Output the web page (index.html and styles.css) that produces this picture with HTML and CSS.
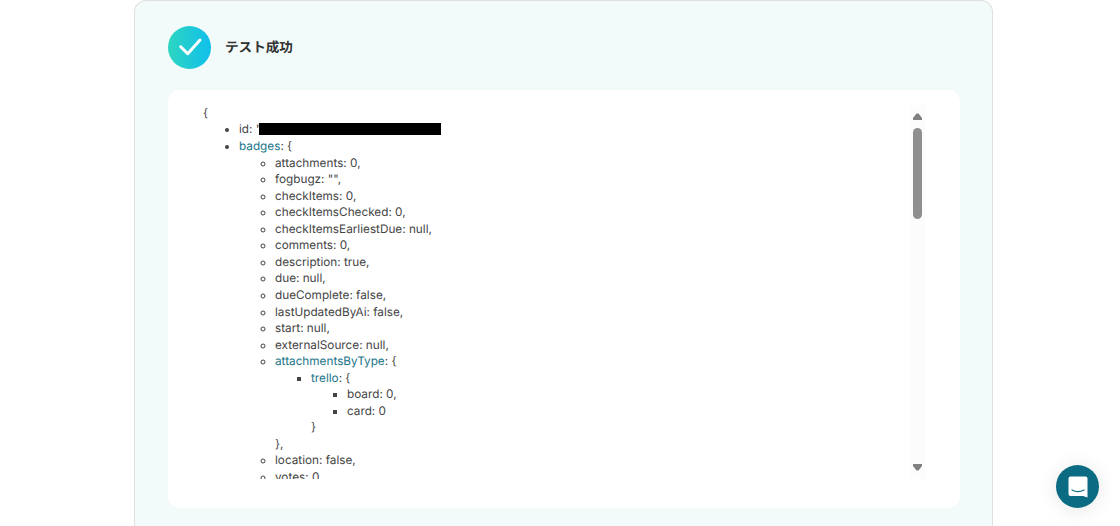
FILE: index.html
```html
<!DOCTYPE html>
<html lang="ja">
<head>
<meta charset="utf-8">
<title>テスト成功</title>
<link rel="stylesheet" href="styles.css">
</head>
<body>
<main class="panel">
  <header class="head">
    <span class="badge">
      <svg class="check" viewBox="0 0 43 43" width="43" height="43"><path d="M12.700 20.700l7 7L32 14" fill="none" stroke="#fff" stroke-width="3" stroke-linecap="round" stroke-linejoin="round"/></svg>
    </span>
    <h1 class="title">テスト成功</h1>
  </header>
  <section class="card">
    <div class="json">
      <div class="code">
        {
        <ul class="l1">
          <li class="id-row">id: "<span class="redact"></span></li>
          <li><span class="key">badges</span>: {
            <ul class="l2">
              <li>attachments: 0,</li>
              <li>fogbugz: "",</li>
              <li>checkItems: 0,</li>
              <li>checkItemsChecked: 0,</li>
              <li>checkItemsEarliestDue: null,</li>
              <li>comments: 0,</li>
              <li>description: true,</li>
              <li>due: null,</li>
              <li>dueComplete: false,</li>
              <li>lastUpdatedByAi: false,</li>
              <li>start: null,</li>
              <li>externalSource: null,</li>
              <li><span class="key">attachmentsByType</span>: {
                <ul class="l3">
                  <li><span class="key">trello</span>: {
                    <ul class="l3">
                      <li>board: 0,</li>
                      <li>card: 0</li>
                    </ul>
                    }
                  </li>
                </ul>
                },
              </li>
              <li>location: false,</li>
              <li>votes: 0</li>
            </ul>
          </li>
        </ul>
      </div>
      <div class="scrollbar">
        <svg class="arrow" viewBox="0 0 9 7" width="9" height="7"><path d="M3.500.5h2L9 5v2H0V5z" fill="#808080"/></svg>
        <span class="thumb"></span>
        <svg class="arrow down" viewBox="0 0 9 7" width="9" height="7"><path d="M3.500 6.500h2L9 2V0H0v2z" fill="#808080"/></svg>
      </div>
    </div>
  </section>
</main>
<button class="chat" aria-label="チャット">
  <svg viewBox="0 0 24 24" width="24" height="24"><path d="M4.500 1.500h15A2 2 0 0 1 21.500 3.500V22.500l-4.500-1.500H4.500A2 2 0 0 1 2.500 19V3.500A2 2 0 0 1 4.500 1.500z" fill="#fff"/><path d="M6 15c3.700 2 8.300 2 12 0" fill="none" stroke="#0b6b82" stroke-width="1.200" stroke-linecap="round"/></svg>
</button>
</body>
</html>
```
FILE: styles.css
```css
html, body {
  margin: 0;
  height: 526px;
  overflow: hidden;
  background: #fff;
}
body {
  font-family: Inter, "Noto Sans CJK JP", sans-serif;
  color: #333;
  text-rendering: geometricPrecision;
}
.panel {
  box-sizing: border-box;
  width: 859px;
  height: 526px;
  margin-left: 134px;
  padding: 25px 32px 0 33px;
  background: #f2fbfa;
  border: 1px solid #e0e0e0;
  border-bottom: 0;
  border-radius: 12px 12px 0 0;
}
.head {
  display: flex;
  align-items: center;
  gap: 14px;
  height: 43px;
}
.badge {
  display: block;
  width: 43px;
  height: 43px;
  border-radius: 50%;
  background: linear-gradient(90deg, #2ed6c0, #10bfeb);
}
.check { display: block; }
.title {
  margin: 0 0 4px;
  font-size: 13.6px;
  font-weight: 700;
  color: #333;
}
.card {
  margin-top: 21px;
  height: 418px;
  box-sizing: border-box;
  padding: 15px 35px 29px;
  background: #fff;
  border-radius: 12px;
}
.json {
  display: flex;
  height: 374px;
}
.code {
  flex: 1;
  overflow: hidden;
  font-size: 11.76px;
  line-height: 16.55px;
  color: #444;
}
ul { margin: 0; padding-left: 36px; }
.l1 { list-style: disc; }
.l2 { list-style: circle; }
.l3 { list-style: square; }
.key { color: #1a7589; }
.id-row { margin: -0.6px 0 0.6px; }
.redact {
  display: inline-block;
  width: 182px;
  height: 12px;
  margin-left: -2px;
  background: #000;
  vertical-align: -2px;
}
.scrollbar {
  display: flex;
  flex-direction: column;
  align-items: center;
  width: 15px;
  box-sizing: border-box;
  padding: 8px 0;
  background: #fcfcfc;
}
.thumb {
  width: 9px;
  height: 91px;
  margin-top: 8px;
  border-radius: 5px;
  background: #8f8f8f;
}
.arrow { display: block; flex: none; }
.down { margin-top: auto; }
.chat {
  position: fixed;
  left: 1056px;
  top: 465px;
  display: flex;
  align-items: center;
  justify-content: center;
  width: 43px;
  height: 43px;
  padding: 0;
  border: 0;
  border-radius: 50%;
  background: #0b6b82;
  box-shadow: 0 2px 20px rgba(0, 0, 0, .1);
}
```
